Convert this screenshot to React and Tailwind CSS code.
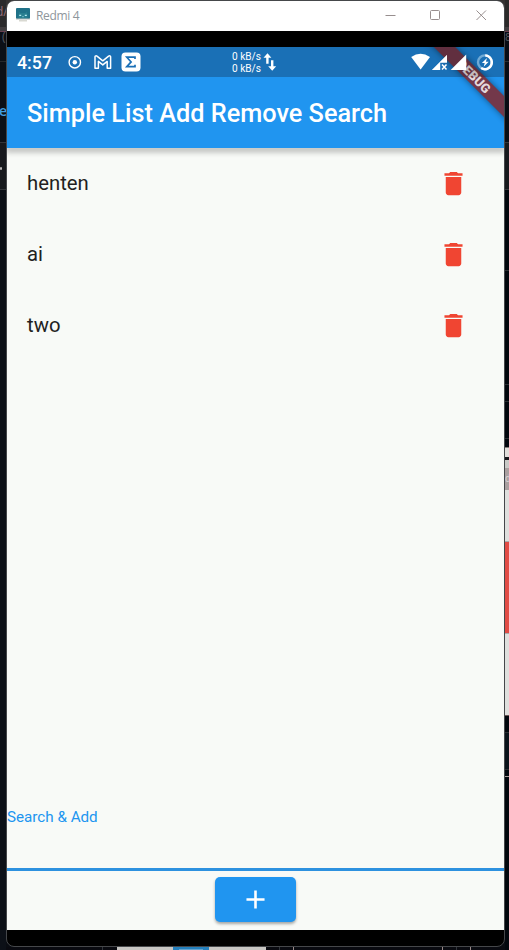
import React from "react";

const items = ["henten", "ai", "two"];

function TrashIcon() {
  return (
    <svg viewBox="0 0 24 24" className="block h-[31px] w-[31px] fill-[#f04532]">
      <path d="M6 19c0 1.1.9 2 2 2h8c1.1 0 2-.9 2-2V7H6v12zM19 4h-3.5l-1-1h-5l-1 1H5v2h14V4z" />
    </svg>
  );
}

function TitleBar() {
  return (
    <div className="flex h-[30px] shrink-0 items-center bg-white pl-[9px]">
      <svg width="14" height="14" viewBox="0 0 14 14" className="block -mt-[2px]">
        <rect x="0" y="0" width="14" height="11" rx="1" fill="#1f7188" />
        <path d="M2.5 11V6.5l1-3 1 1.5h5l1-1.5 1 3V11z" fill="#287f91" />
        <path d="M3.2 7.3h2M8.8 7.3h2" stroke="#b5edf2" strokeWidth="1.3" />
        <path d="M6.3 8.7h1.4" stroke="#b5edf2" strokeWidth=".7" />
        <path d="M0 10.5h14v1H0z" fill="#b8bcba" />
        <path d="M3 12h8v1.5H3z" fill="#d9d9d2" />
      </svg>
      <span className="ml-[6px] font-['Open_Sans','Noto_Sans',sans-serif] text-[12px] leading-4 tracking-[-0.35px] text-[#8e969b]">Redmi 4</span>
      <svg width="104" height="14" viewBox="0 0 104 14" className="-mt-[2px] ml-auto mr-[16px] block" fill="none" stroke="#978e8e">
        <path d="M1.5 7.5h10" />
        <rect x="46.5" y="2.5" width="9" height="9" rx="1" />
        <path d="M92.5 2.5l9.5 9.5m0-9.5l-9.5 9.5" />
      </svg>
    </div>
  );
}

function StatusBar() {
  return (
    <div className="relative z-20 flex h-[30px] shrink-0 items-center text-white">
      <span className="ml-[10px] mt-[2px] w-[40px] text-[17.8px] font-medium leading-5">4:57</span>
      <svg width="80" height="22" viewBox="0 0 80 22" className="ml-[8px] block">
        <circle cx="9.8" cy="11.3" r="5.7" fill="none" stroke="#fff" strokeWidth="1.4" />
        <circle cx="9.8" cy="11.3" r="2.2" fill="#fff" />
        <path d="M30 17.2V5.8c0-1 1.2-1.3 2-.6l5.8 4.6 5.8-4.6c.8-.7 2-.4 2 .6v11.4h-3.4v-6.8l-4.4 3.5-4.4-3.5v6.8z" fill="none" stroke="#fff" strokeWidth="1.5" strokeLinejoin="round" />
        <rect x="56.5" y="1.4" width="19" height="19" rx="4" fill="#fff" />
        <path d="M70 8V6.2h-8.2l4.3 4.7-4.3 4.7H70v-1.9" fill="none" stroke="#1b70b7" strokeWidth="1.7" />
      </svg>
      <div className="ml-[87px] mt-px w-[30px] whitespace-nowrap text-[10.1px] leading-[12px]">
        <div>0 kB/s</div>
        <div>0 kB/s</div>
      </div>
      <svg width="15" height="20" viewBox="0 0 15 20" className="ml-[1px] block fill-white">
        <path d="M4.5 1.2L0.5 5.8h2.7v6h2.4v-6h2.8zM8 8.2h2.4v6h2.8l-4 4.5-4-4.5h2.8z" />
      </svg>
      <svg width="84" height="22" viewBox="0 0 84 22" className="ml-auto mr-[9px] block">
        <path d="M.2 6Q9.5-.5 19 6L9.6 18.5z" fill="#fff" />
        <path d="M20.8 19L36 3.7v8h-6.8V19z" fill="#fff" />
        <path d="M31 13.5l4.5 5m0-5l-4.5 5" stroke="#fff" strokeWidth="1.5" />
        <path d="M39.7 19L55.2 3.5V19z" fill="#fff" />
        <circle cx="73.9" cy="11.3" r="6.9" fill="none" stroke="#71aad5" strokeWidth="2.4" />
        <path d="M74.2 4.4A6.9 6.9 0 1 1 70.2 17.1" fill="none" stroke="#fff" strokeWidth="2.4" />
        <path d="M76 6.9l-5.1 5h2.8l-1 3.9 5-5.1h-2.8z" fill="#fff" />
      </svg>
    </div>
  );
}

// The desktop visible along the edges of the mirrored phone window.
function LeftEdge() {
  return (
    <div className="flex w-[6px] shrink-0 flex-col overflow-hidden bg-[#0c1017] font-['Open_Sans',sans-serif]">
      <div className="h-[27px] bg-[#2b2a2c] pt-[3px] text-[12px] leading-[18px] text-[#966f7a]"><span className="-ml-[4px] whitespace-nowrap">d/</span></div>
      <div className="h-[4px] bg-[#413d40]" />
      <div className="h-px bg-[#68404f]" />
      <div className="h-[29px] overflow-hidden pl-[2px] text-[12px] leading-[10px] text-[#555960]">(</div>
      <div className="h-px bg-[#26292c]" />
      <div className="h-[80px] pt-[39px] text-[14px] font-semibold leading-[20px] text-[#419bdf]"><span className="-ml-[1px]">e</span></div>
      <div className="h-px bg-[#34363a]" />
      <div className="h-[46px] bg-[#17191d] pt-[24px]"><div className="h-[3px] w-[2px] rounded-full bg-[#b9b5b5]" /></div>
      <div className="h-px bg-[#34363a]" />
      <div className="flex-1" />
    </div>
  );
}

function RightEdge() {
  return (
    <div className="flex w-[4px] shrink-0 flex-col bg-[#02070d]">
      <div className="h-[27px] bg-[#2b2a2a]" />
      <div className="h-[4px] bg-[#413d40]" />
      <div className="h-px bg-[#68404f]" />
      <div className="h-[29px] overflow-hidden bg-[#080c14] text-[11px] leading-[12px] text-[#55595f]">8</div>
      <div className="h-px bg-[#2a2d31]" />
      <div className="h-[80px] bg-[#080c14]" />
      <div className="h-px bg-[#34363a]" />
      <div className="h-[46px] bg-[#17191d]" />
      <div className="h-px bg-[#34363a]" />
      <div className="h-[80px]" />
      <div className="h-px bg-[#292d31]" />
      <div className="h-[113px]" />
      <div className="h-px bg-[#292d31]" />
      <div className="h-[16px]" />
      <div className="h-px bg-[#292d31]" />
      <div className="h-[36px]" />
      <div className="h-px bg-[#292d31]" />
      <div className="h-[8px]" />
      <div className="h-px bg-[#827b79]" />
      <div className="h-[9px] bg-[#e1dedb]" />
      <div className="h-[3px] bg-[#17171b]" />
      <div className="h-[8px] bg-[#c9c9c6]" />
      <div className="h-[22px] overflow-hidden bg-[#aaa0a0] text-[10px] leading-[22px] text-[#d8d2d2]">d</div>
      <div className="h-[51px] bg-[#dfdfdd]" />
      <div className="h-px bg-[#aaa]" />
      <div className="h-[91px] bg-[#e14c45]" />
      <div className="h-px bg-[#aaa]" />
      <div className="h-[81px] bg-[#dfdfdd]" />
      <div className="h-px bg-[#655451]" />
      <div className="h-[16px]" />
      <div className="h-px bg-[#292d31]" />
      <div className="h-[36px] bg-[#0a131a]" />
      <div className="h-px bg-[#292d31]" />
      <div className="h-[6px]" />
      <div className="h-px bg-[#aaa09d]" />
      <div className="flex-1" />
    </div>
  );
}

function BottomEdge() {
  return (
    <div className="flex h-[4px] shrink-0 bg-[#090a10]">
      <div className="w-[96px]" />
      <div className="w-px bg-[#30343a]" />
      <div className="w-[14px]" />
      <div className="w-[56px] bg-[#c7c6c3]" />
      <div className="flex h-[4px] w-[36px] justify-center bg-[#2480bd] pt-[2px]"><div className="h-px w-[24px] bg-[#65a5d1]" /></div>
      <div className="w-[57px] bg-[#c7c6c3]" />
      <div className="w-[13px]" />
      <div className="w-px bg-[#30343a]" />
      <div className="w-[13px]" />
      <div className="w-px bg-[#998988]" />
      <div className="w-[148px]" />
      <div className="w-px bg-[#998988]" />
      <div className="w-[13px]" />
      <div className="w-px bg-[#30343a]" />
      <div className="w-[13px]" />
      <div className="w-px bg-[#998988]" />
    </div>
  );
}

export default function App() {
  return (
    <div className="flex h-[950px] w-[509px] overflow-hidden bg-[#0c1017] font-[Roboto,'Noto_Sans',sans-serif]">
      <LeftEdge />
      <div className="flex w-[499px] shrink-0 flex-col bg-[linear-gradient(#363333_0_31px,#090c12_31px)]">
        <div className="flex h-[947px] shrink-0 flex-col overflow-hidden rounded-[8px] border border-[#45474a] bg-black">
          <TitleBar />
          <div className="h-[16px] shrink-0 bg-black" />
          <div className="relative flex h-[883px] shrink-0 flex-col overflow-hidden bg-[#f8faf7]">
            <header className="relative z-10 flex h-[101px] shrink-0 flex-col overflow-hidden bg-[linear-gradient(#1a70b6_0_30px,#2095f0_30px)]">
              <div className="absolute left-[397.5px] top-[22.5px] flex h-[15px] w-[140px] rotate-45 items-center justify-center bg-[#73384a] shadow-[0_0_6px_#0007]">
                <span className="mr-[3px] text-[12.9px] font-black leading-[15px] text-[#e4dadd]">DEBUG</span>
              </div>
              <div className="absolute inset-x-0 top-0 h-[30px] bg-[#00000026] [clip-path:polygon(427px_0,448px_0,478px_30px,457px_30px)]" />
              <StatusBar />
              <h1 className="pl-[20px] pt-[21.5px] text-[25.3px] font-medium leading-[30px] text-white">Simple List Add Remove Search</h1>
            </header>
            <div className="relative h-0 shadow-[0_1px_6px_2px_#0006]" />
            <ul className="flex-1">
              {items.map((item) => (
                <li key={item} className="flex h-[71px] items-center justify-between pl-[20px] pr-[35px] text-[20.3px] leading-6 text-[#231f21]">
                  <span className="-mt-[2px]">{item}</span>
                  <TrashIcon />
                </li>
              ))}
            </ul>
            <div className="flex h-[69px] shrink-0 flex-col border-b-[3px] border-[#2d91df]">
              <label className="pt-[5px] text-[15.2px] leading-[20px] text-[#2095f0]">Search &amp; Add</label>
            </div>
            <div className="flex h-[59px] shrink-0 justify-center pt-[6px]">
              <button className="flex h-[45px] w-[81px] items-center justify-center rounded-[5px] bg-[#2095f0] shadow-[0_2px_3px_#0005]">
                <svg viewBox="0 0 24 24" className="block h-[31px] w-[31px] fill-white"><path d="M19 13h-6v6h-2v-6H5v-2h6V5h2v6h6v2z" /></svg>
              </button>
            </div>
          </div>
        </div>
        <BottomEdge />
      </div>
      <RightEdge />
    </div>
  );
}
